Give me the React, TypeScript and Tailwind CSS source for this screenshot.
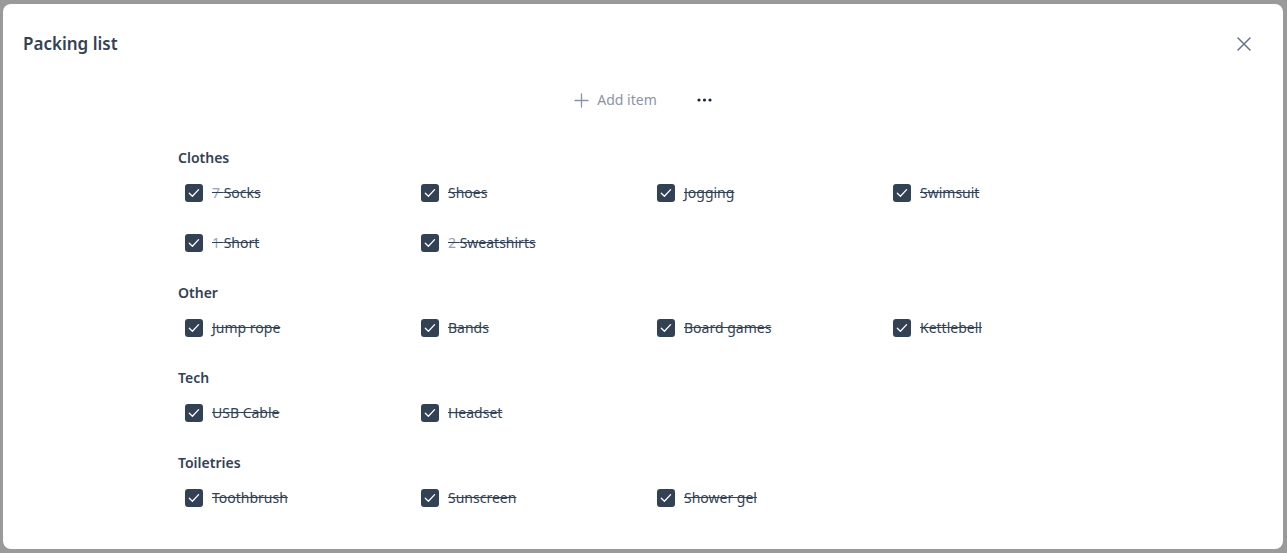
import React from "react";

type Item = { n?: string; label: string };
const sections: { title: string; items: Item[] }[] = [
  {
    title: "Clothes",
    items: [
      { n: "7", label: "Socks" },
      { label: "Shoes" },
      { label: "Jogging" },
      { label: "Swimsuit" },
      { n: "1", label: "Short" },
      { n: "2", label: "Sweatshirts" },
    ],
  },
  {
    title: "Other",
    items: [{ label: "Jump rope" }, { label: "Bands" }, { label: "Board games" }, { label: "Kettlebell" }],
  },
  { title: "Tech", items: [{ label: "USB Cable" }, { label: "Headset" }] },
  { title: "Toiletries", items: [{ label: "Toothbrush" }, { label: "Sunscreen" }, { label: "Shower gel" }] },
];

function Check() {
  return (
    <span className="flex h-[18px] w-[18px] shrink-0 items-center justify-center rounded-[3px] bg-[#334155]">
      <svg width="14" height="14" viewBox="0 0 14 14" fill="none">
        <path d="M2.3 7.3 L5.4 10.2 L11.6 3.6" stroke="white" strokeWidth="1.3" strokeLinecap="round" strokeLinejoin="round" />
      </svg>
    </span>
  );
}

export default function App() {
  return (
    <div
      className="h-[553px] w-[1287px] bg-[#9a9a9a] px-[3px] pt-[4px]"
      style={{ fontFamily: '"Noto Sans", "Open Sans", sans-serif' }}
    >
      <div className="h-[545px] w-[1280px] rounded-[8px] bg-white">
        <div className="flex items-center justify-between pl-[20px] pr-[32px] pt-[26px]">
          <h1 className="text-[17px] leading-[28px] font-semibold text-[#334155]">Packing list</h1>
          <svg width="14" height="14" viewBox="0 0 14 14" fill="none">
            <path d="M1 1 L13 13 M13 1 L1 13" stroke="#64748b" strokeWidth="1.5" strokeLinecap="round" />
          </svg>
        </div>
        <div className="mt-[32px] flex h-[20px] items-center justify-center gap-[40px]">
          <div className="flex items-center gap-[8px] text-[14px] leading-[20px] text-[#8a94a6]">
            <svg width="15" height="15" viewBox="0 0 15 15" fill="none">
              <path d="M7.5 1 V14 M1 7.5 H14" stroke="#8a94a6" strokeWidth="1.3" strokeLinecap="round" />
            </svg>
            <span>Add item</span>
          </div>
          <svg width="15" height="4" viewBox="0 0 15 4">
            <circle cx="2" cy="2" r="1.6" fill="#1e293b" />
            <circle cx="7.5" cy="2" r="1.6" fill="#1e293b" />
            <circle cx="13" cy="2" r="1.6" fill="#1e293b" />
          </svg>
        </div>
        <div className="mt-[38px] flex flex-col gap-[15px] pl-[175px]">
          {sections.map((s) => (
            <div key={s.title}>
              <div className="h-[20px] text-[14px] leading-[20px] font-semibold text-[#334155]">{s.title}</div>
              <div className="grid grid-cols-[repeat(4,236px)] pl-[7px]">
                {s.items.map((it) => (
                  <div key={it.label} className="flex h-[50px] items-center gap-[9px]">
                    <Check />
                    <span className="text-[14px] leading-[20px] text-[#334155] line-through">
                      {it.n && <span className="text-[#94a3b8]">{it.n} </span>}
                      {it.label}
                    </span>
                  </div>
                ))}
              </div>
            </div>
          ))}
        </div>
      </div>
    </div>
  );
}
